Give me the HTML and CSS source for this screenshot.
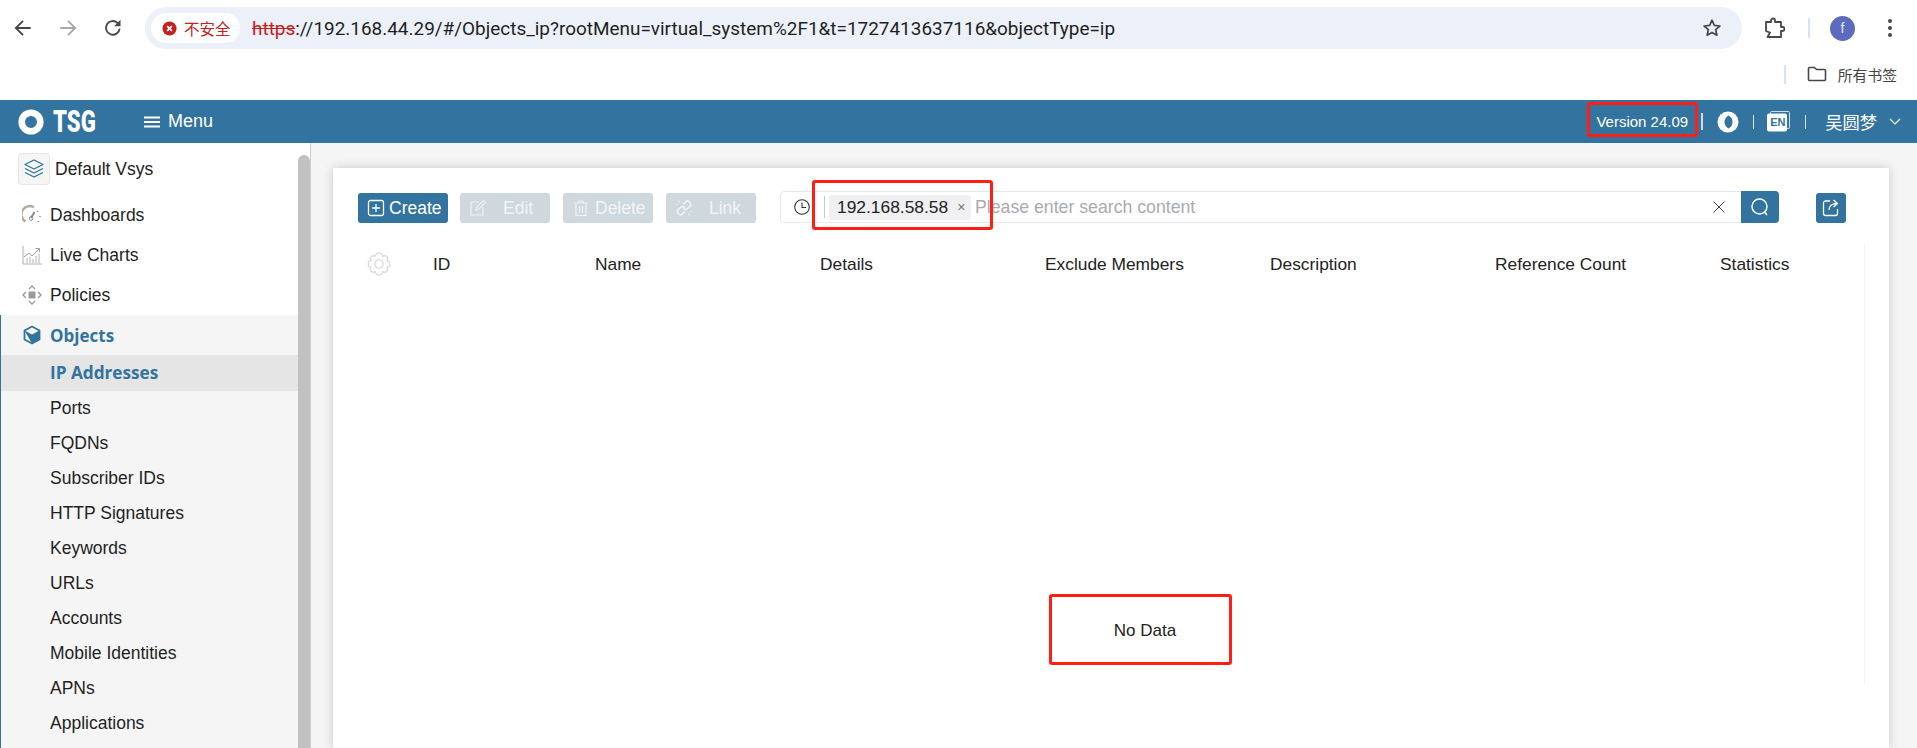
FILE: index.html
```html
<!DOCTYPE html>
<html lang="en">
<head>
<meta charset="utf-8">
<title>TSG - IP Addresses</title>
<link rel="stylesheet" href="styles.css">
</head>
<body>
<header class="chrome">
  <div class="toolbar">
    <svg class="nav-icon" viewBox="0 0 20 20"><path d="M17 10H4M10 3.500 3.500 10l6.500 6.500" fill="none" stroke="#474747" stroke-width="1.700"/></svg>
    <svg class="nav-icon" viewBox="0 0 20 20"><path d="M3 10h13M10 3.500l6.500 6.500L10 16.500" fill="none" stroke="#a8a8a8" stroke-width="1.700"/></svg>
    <svg class="nav-icon" viewBox="0 0 20 20"><path d="M16 10.500a6.200 6.200 0 1 1-1.800-5L16 7.300" fill="none" stroke="#474747" stroke-width="1.700"/><path d="M16.800 2.600v5.700h-5.700z" fill="#474747"/></svg>
    <div class="omnibox">
      <div class="pill">
        <svg class="pill-icon" viewBox="0 0 16 16"><circle cx="8" cy="8" r="7.500" fill="#c5221f"/><path d="M5.500 5.500l5 5M10.500 5.500l-5 5" stroke="#fff" stroke-width="1.800"/></svg>
        <span>不安全</span>
      </div>
      <div class="url"><span class="scheme">https</span>://192.168.44.29/#/Objects_ip?rootMenu=virtual_system%2F1&amp;t=1727413637116&amp;objectType=ip</div>
      <svg class="star" viewBox="0 0 20 20"><path d="M10 2.200l2.300 5.200 5.600.6-4.200 3.700 1.200 5.500L10 14.400l-4.900 2.800 1.200-5.500L2.100 8l5.600-.6z" fill="none" stroke="#474747" stroke-width="1.700" stroke-linejoin="round"/></svg>
    </div>
    <svg class="puzzle" viewBox="0 0 22 22"><path d="M3 5h5V3.500a2 2 0 0 1 4 0V5h6v5h1.500a2 2 0 0 1 0 4H18v6H4.500L6 17.500 7 15.500 4 14.500 3 14z" fill="none" stroke="#474747" stroke-width="1.800" stroke-linejoin="round"/></svg>
    <span class="tool-sep"></span>
    <span class="avatar">f</span>
    <svg class="dots" viewBox="0 0 6 20"><circle cx="3" cy="3" r="2" fill="#474747"/><circle cx="3" cy="10" r="2" fill="#474747"/><circle cx="3" cy="17" r="2" fill="#474747"/></svg>
  </div>
  <div class="bookmarks">
    <span class="book-sep"></span>
    <svg class="folder" viewBox="0 0 20 16"><path d="M1.500 2.500a1 1 0 0 1 1-1h5l2 2h8a1 1 0 0 1 1 1v9a1 1 0 0 1-1 1h-15a1 1 0 0 1-1-1z" fill="none" stroke="#474747" stroke-width="1.600"/></svg>
    <span class="book-label">所有书签</span>
  </div>
</header>

<div class="topbar">
  <svg class="logo-ring" viewBox="0 0 26 26"><circle cx="13" cy="13" r="9.300" fill="none" stroke="#fff" stroke-width="6.600"/></svg>
  <span class="logo-text">TSG</span>
  <svg class="menu-icon" viewBox="0 0 16 12"><path d="M0 1.500h16M0 6h16M0 10.500h16" stroke="#fff" stroke-width="2"/></svg>
  <span class="menu-label">Menu</span>
  <span class="version">Version 24.09</span>
  <span class="bar-sep thick"></span>
  <svg class="theme-icon" viewBox="0 0 22 22"><circle cx="11" cy="11" r="10.500" fill="#fff"/><path d="M11.500 4.500c2.800 1.200 4 3.800 4 6.500s-1.200 5.300-4 6.500c-2.500-1.500-4-3.800-4-6.500s1.500-5 4-6.500z" fill="#33739f"/></svg>
  <span class="bar-sep"></span>
  <svg class="lang-icon" viewBox="0 0 23 21"><rect x="3.500" y=".5" width="19" height="17" rx="1" fill="none" stroke="#cfe0ec"/><rect x="0" y="2.500" width="20" height="18" rx="2" fill="#fff"/></svg>
  <span class="lang-text">EN</span>
  <span class="bar-sep"></span>
  <span class="user">吴圆梦</span>
  <svg class="chevron" viewBox="0 0 12 7"><path d="M1 1l5 5 5-5" fill="none" stroke="#fff" stroke-width="1.200"/></svg>
</div>

<div class="app">
  <aside class="sidebar">
    <div class="side-list">
      <div class="vsys">
        <span class="vsys-box">
          <svg viewBox="0 0 22 22"><path d="M11 2l9 4.500-9 4.500-9-4.500zM2 10.500l9 4.500 9-4.500M2 14.500l9 4.500 9-4.500" fill="none" stroke="#33739f" stroke-width="1.300" stroke-linejoin="round"/></svg>
        </span>
        <span>Default Vsys</span>
      </div>
      <div class="item">
        <svg viewBox="0 0 20 20"><path d="M3.500 16.500A8 8 0 0 1 12 2.300" fill="none" stroke="#b5a99c" stroke-width="2.400"/><path d="M9 13l3.500-6" stroke="#8a8a8a" stroke-width="2"/><circle cx="9" cy="13.500" r="1.800" fill="none" stroke="#8a8a8a"/><path d="M15.500 6v1M18 11v1M16.500 16v1" stroke="#8a8a8a" stroke-width="1.500"/></svg>
        <span>Dashboards</span>
      </div>
      <div class="item">
        <svg viewBox="0 0 20 20"><path d="M1 1v18h19" fill="none" stroke="#b3aeb8"/><path d="M2 12l5-4 3 3 7-7M13.500 3.500H17.500V7" fill="none" stroke="#a79d97"/><path d="M5 18v-5M8 18v-6M11 18v-4M14 18v-7M17 18V9" stroke="#b3aeb8"/></svg>
        <span>Live Charts</span>
      </div>
      <div class="item">
        <svg viewBox="0 0 20 20"><rect x="6.500" y="6.500" width="7" height="7" rx="1" fill="#9a9a9a"/><path d="M7 4l3-3 3 3M7 16l3 3 3-3M4 7l-3 3 3 3M16 7l3 3-3 3" fill="none" stroke="#9a9a9a" stroke-width="1.400"/></svg>
        <span>Policies</span>
      </div>
      <div class="group">
        <div class="item active">
          <svg viewBox="0 0 20 20"><path d="M10 1.500l7.500 4v9L10 18.500l-7.500-4v-9z" fill="none" stroke="#33739f" stroke-width="1.800" stroke-linejoin="round"/><path d="M2.500 5.500L10 9.500l7.500-4-.2 9-7.300 4z" fill="#33739f"/></svg>
          <span>Objects</span>
        </div>
        <div class="sub current">IP Addresses</div>
        <div class="sub">Ports</div>
        <div class="sub">FQDNs</div>
        <div class="sub">Subscriber IDs</div>
        <div class="sub">HTTP Signatures</div>
        <div class="sub">Keywords</div>
        <div class="sub">URLs</div>
        <div class="sub">Accounts</div>
        <div class="sub">Mobile Identities</div>
        <div class="sub">APNs</div>
        <div class="sub">Applications</div>
      </div>
    </div>
    <div class="scrollbar"></div>
  </aside>

  <main class="content">
    <section class="card">
      <div class="actions">
        <button class="btn primary">
          <svg viewBox="0 0 18 18"><rect x="1.500" y="1.500" width="15" height="15" rx="2" fill="none" stroke="#fff" stroke-width="1.300"/><path d="M9 5v8M5 9h8" stroke="#fff" stroke-width="1.300"/></svg>
          Create
        </button>
        <button class="btn disabled wide">
          <svg viewBox="0 0 18 18"><path d="M14 8v8H2V3h8" fill="none" stroke="#eef2f4" stroke-width="1.200"/><path d="M7 11l.5-2.500L14.500 1.500 16.500 3.500 9.500 10.500z" fill="none" stroke="#eef2f4" stroke-width="1.200"/></svg>
          Edit
        </button>
        <button class="btn disabled">
          <svg viewBox="0 0 18 18"><path d="M2 4h14M7 4V2h4v2M4 4v12.500h10V4M7.500 7v7M10.500 7v7" fill="none" stroke="#eef2f4" stroke-width="1.200"/></svg>
          Delete
        </button>
        <button class="btn disabled wide last">
          <svg viewBox="0 0 18 18"><path d="M8 5.500l2.500-2.500a3 3 0 0 1 4.300 4.300L12.500 9.500a3 3 0 0 1-4.300 0M10 12.500L7.500 15a3 3 0 0 1-4.300-4.300L5.500 8.500a3 3 0 0 1 4.300 0" fill="none" stroke="#eef2f4" stroke-width="1.700"/><path d="M3.500 1.500l1 2M1 5l2 .5M14.500 16.500l-1-2M17 13l-2-.5" stroke="#eef2f4"/></svg>
          Link
        </button>
        <div class="search">
          <svg class="clock" viewBox="0 0 18 18"><circle cx="9" cy="9" r="7.300" fill="none" stroke="#333" stroke-width="1.100"/><path d="M9 4.500V9.500H13" fill="none" stroke="#333" stroke-width="1.100"/></svg>
          <span class="search-sep"></span>
          <span class="chip">192.168.58.58<span class="chip-x">×</span></span>
          <span class="placeholder">Please enter search content</span>
          <svg class="clear" viewBox="0 0 12 12"><path d="M.5.5l11 11M11.500.5l-11 11" stroke="#444" stroke-width="1"/></svg>
          <span class="search-btn">
            <svg viewBox="0 0 20 20"><circle cx="9.500" cy="9.500" r="7.500" fill="none" stroke="#fff" stroke-width="1.500"/><path d="M14.500 15l2.500 3" stroke="#fff" stroke-width="1.500"/></svg>
          </span>
        </div>
        <button class="export">
          <svg viewBox="0 0 20 20"><path d="M9 3H4.500A2 2 0 0 0 2.500 5v10.500a2 2 0 0 0 2 2h10a2 2 0 0 0 2-2V11" fill="none" stroke="#fff" stroke-width="1.300"/><path d="M8 12c0-4 3-6.500 8-6.500M12.500 2l4 3.500-4 3.500" fill="none" stroke="#fff" stroke-width="1.300"/></svg>
        </button>
      </div>

      <div class="table">
        <div class="thead">
          <svg class="gear" viewBox="0 0 24 24"><path d="M12 1.500l2.500 1 .8 2.300 2.400-.6 2.400 2.300-.6 2.500 2.200 1v4l-2.200 1 .6 2.500-2.400 2.300-2.400-.6-.8 2.300-2.500 1-2.500-1-.8-2.300-2.400.6-2.400-2.300.6-2.500-2.200-1V10l2.200-1-.6-2.500 2.400-2.300 2.400.6.800-2.300z" fill="none" stroke="#dcdcdc" stroke-width="1.300" stroke-linejoin="round"/><circle cx="12" cy="12" r="3.800" fill="none" stroke="#dcdcdc" stroke-width="1.300"/></svg>
          <span>ID</span>
          <span>Name</span>
          <span>Details</span>
          <span>Exclude Members</span>
          <span>Description</span>
          <span>Reference Count</span>
          <span>Statistics</span>
        </div>
        <div class="empty">No Data</div>
      </div>
    </section>
  </main>
</div>

<div class="mark mark-version"></div>
<div class="mark mark-chip"></div>
<div class="mark mark-empty"></div>
</body>
</html>
```

FILE: styles.css
```css
* { box-sizing: border-box; }
html, body { margin: 0; padding: 0; height: 748px; overflow: hidden; background: #fff; }
body { position: relative; font-family: "Liberation Sans", Arial, sans-serif; color: #222; }
svg { display: block; flex: none; }

/* browser chrome */
.chrome { height: 100px; background: #fff; display: flex; flex-direction: column; }
.toolbar { height: 56px; padding: 7px 0 0 12px; display: flex; align-items: flex-start; }
.nav-icon { width: 22px; height: 22px; margin: 10px 23px 0 0; }
.nav-icon:nth-child(3) { margin-right: 21px; }
.omnibox { width: 1597px; height: 42px; border-radius: 21px; background: #ecf1f9; display: flex; align-items: center; padding: 0 20px 0 6px; }
.pill { width: 89px; height: 30px; border-radius: 15px; background: #fff; display: flex; align-items: center; padding-left: 11px; gap: 7px; color: #c5221f; font: 15.500px "Noto Sans CJK SC", sans-serif; }
.pill-icon { width: 15px; height: 15px; }
.url { margin-left: 12px; font: 18.950px Roboto, "Liberation Sans", sans-serif; color: #1f1f1f; white-space: nowrap; flex: 1; }
.scheme { color: #c5221f; text-decoration: line-through; }
.star { width: 20px; height: 20px; }
.puzzle { width: 22px; height: 22px; margin: 10px 0 0 21px; }
.tool-sep { width: 2px; height: 20px; background: #d3e3fd; margin: 11px 0 0 23px; }
.avatar { width: 25px; height: 25px; border-radius: 50%; background: #5c6bc0; color: #e8eaf6; font: 14px/25px "Liberation Sans", sans-serif; text-align: center; margin: 9px 0 0 20px; }
.dots { width: 6px; height: 20px; margin: 11px 0 0 32px; }
.bookmarks { flex: 1; display: flex; align-items: center; justify-content: flex-end; padding: 0 20px 8px 0; }
.book-sep { width: 2px; height: 19px; background: #d3e3fd; margin-right: 21px; }
.folder { width: 20px; height: 16px; margin-right: 11px; }
.book-label { font: 14.800px "Noto Sans CJK SC", sans-serif; color: #444; }

/* product top bar */
.topbar { height: 43px; background: #33739f; color: #fff; display: flex; align-items: center; padding-left: 18px; }
.logo-ring { width: 26px; height: 26px; }
.logo-text { font: 900 31px/1 Roboto, sans-serif; margin-left: 9px; transform: scaleX(.714); transform-origin: left; width: 45px; }
.menu-icon { width: 16px; height: 12px; margin-left: 46px; }
.menu-label { font-size: 18px; margin-left: 8px; flex: 1; }
.version { font-size: 15px; margin-right: 13px; }
.bar-sep { width: 1px; height: 14px; background: #d5e2ea; }
.bar-sep.thick { width: 2px; height: 17px; background: #d8d8d8; }
.theme-icon { width: 22px; height: 22px; margin: 0 14px 0 14px; }
.lang-icon { width: 23px; height: 21px; margin-left: 13px; }
.lang-text { font: 700 11px/1 "Liberation Sans", sans-serif; color: #33739f; width: 0; position: relative; left: -20px; top: 1px; margin-right: 15px; }
.user { font: 17.300px "Noto Sans CJK SC", sans-serif; margin-left: 19px; }
.chevron { width: 12px; height: 7px; margin: 0 16px 0 12px; }

/* body */
.app { height: 605px; display: flex; background: #f5f5f5; overflow: hidden; }
.sidebar { width: 311px; height: 605px; background: #fff; display: flex; border-right: 1px solid #cfcfcf; }
.side-list { width: 298px; height: 605px; padding-top: 9px; font-size: 17.500px; display: flex; flex-direction: column; }
.scrollbar { width: 12px; margin-top: 12px; background: #c1c1c1; border-radius: 6px 6px 0 0; }
.vsys { height: 40px; display: flex; align-items: center; gap: 5px; padding: 0 0 6px 18px; margin-bottom: 3px; flex: none; }
.vsys-box { width: 32px; height: 32px; border: 1px solid #e6e6e6; background: #f5f5f5; border-radius: 4px; display: flex; align-items: center; justify-content: center; }
.vsys-box svg { width: 22px; height: 22px; }
.item { height: 40px; display: flex; align-items: center; padding-left: 22px; gap: 8px; flex: none; color: #1f1f1f; }
.item svg { width: 20px; height: 20px; }
.group { background: #f5f5f5; border-left: 1px solid #33739f; flex: 1; min-height: 0; overflow: hidden; }
.item.active { font: 700 17px "Open Sans", sans-serif; color: #33739f; padding-left: 21px; }
.sub { height: 35px; line-height: 35px; padding-left: 49px; color: #1f1f1f; }
.sub.current { height: 36px; font: 700 17.200px/35px "Open Sans", sans-serif; color: #33739f; background: #e5e5e5; }

/* main card */
.content { flex: 1; padding: 25px 28px 0 22px; min-width: 0; }
.card { height: 100%; background: #fff; box-shadow: 0 0 10px rgba(0, 0, 0, .18); padding: 23px 25px 0; }
.actions { display: flex; align-items: flex-start; }
.btn { height: 30px; margin-top: 2px; width: 90px; border: 0; border-radius: 3px; display: flex; align-items: center; gap: 5px; font: 17.500px "Liberation Sans", sans-serif; color: #fff; padding: 0 0 0 9px; margin-right: 13px; }
.btn svg { width: 18px; height: 18px; }
.btn.wide { gap: 16px; }
.btn.last { margin-right: 0; }
.primary { background: #33739f; margin-right: 12px; gap: 4px; }
.disabled { background: #cfd8dd; color: #f2f5f6; }
.search { width: 999px; height: 32px; margin-left: 24px; border: 1px solid #e6e7ee; border-radius: 4px; display: flex; align-items: center; padding-left: 12px; }
.clock { width: 18px; height: 18px; }
.search-sep { width: 1px; height: 22px; background: #c8c8c8; margin: 0 4px 0 13px; }
.chip { height: 25px; width: 142px; background: #f0f0f2; border-radius: 3px; display: flex; align-items: center; padding-left: 8px; font-size: 17.400px; color: #222; }
.chip-x { margin-left: 9px; font-size: 14px; color: #777; }
.placeholder { margin-left: 4px; font-size: 17.700px; color: #a8abb2; flex: 1; }
.clear { width: 12px; height: 12px; margin-right: 16px; }
.search-btn { width: 38px; height: 32px; margin: -1px -1px -1px 0; background: #33739f; border-radius: 0 4px 4px 0; display: flex; align-items: center; justify-content: center; }
.search-btn svg { width: 20px; height: 20px; }
.export { width: 30px; height: 30px; margin: 2px 0 0 37px; background: #33739f; border: 0; border-radius: 3px; padding: 5px; }
.export svg { width: 20px; height: 20px; }

.table { margin-top: 21px; border-right: 1px solid #f5f5f5; height: 440px; width: 1507px; }
.thead { height: 40px; display: grid; grid-template-columns: 75px 162px repeat(5, 225px) 144px; align-items: center; font-size: 17.350px; color: #222; white-space: nowrap; }
.gear { width: 26px; height: 26px; margin-left: 8px; }
.empty { padding: 337px 0 0 68px; text-align: center; font-size: 17px; line-height: 20px; }

/* review annotations drawn over the screenshot */
.mark { position: absolute; border: 3px solid #ff1f14; border-radius: 3px; pointer-events: none; }
.mark-version { left: 1587px; top: 102px; width: 111px; height: 35px; }
.mark-chip { left: 812px; top: 180px; width: 181px; height: 50px; }
.mark-empty { left: 1049px; top: 594px; width: 183px; height: 71px; }
```
